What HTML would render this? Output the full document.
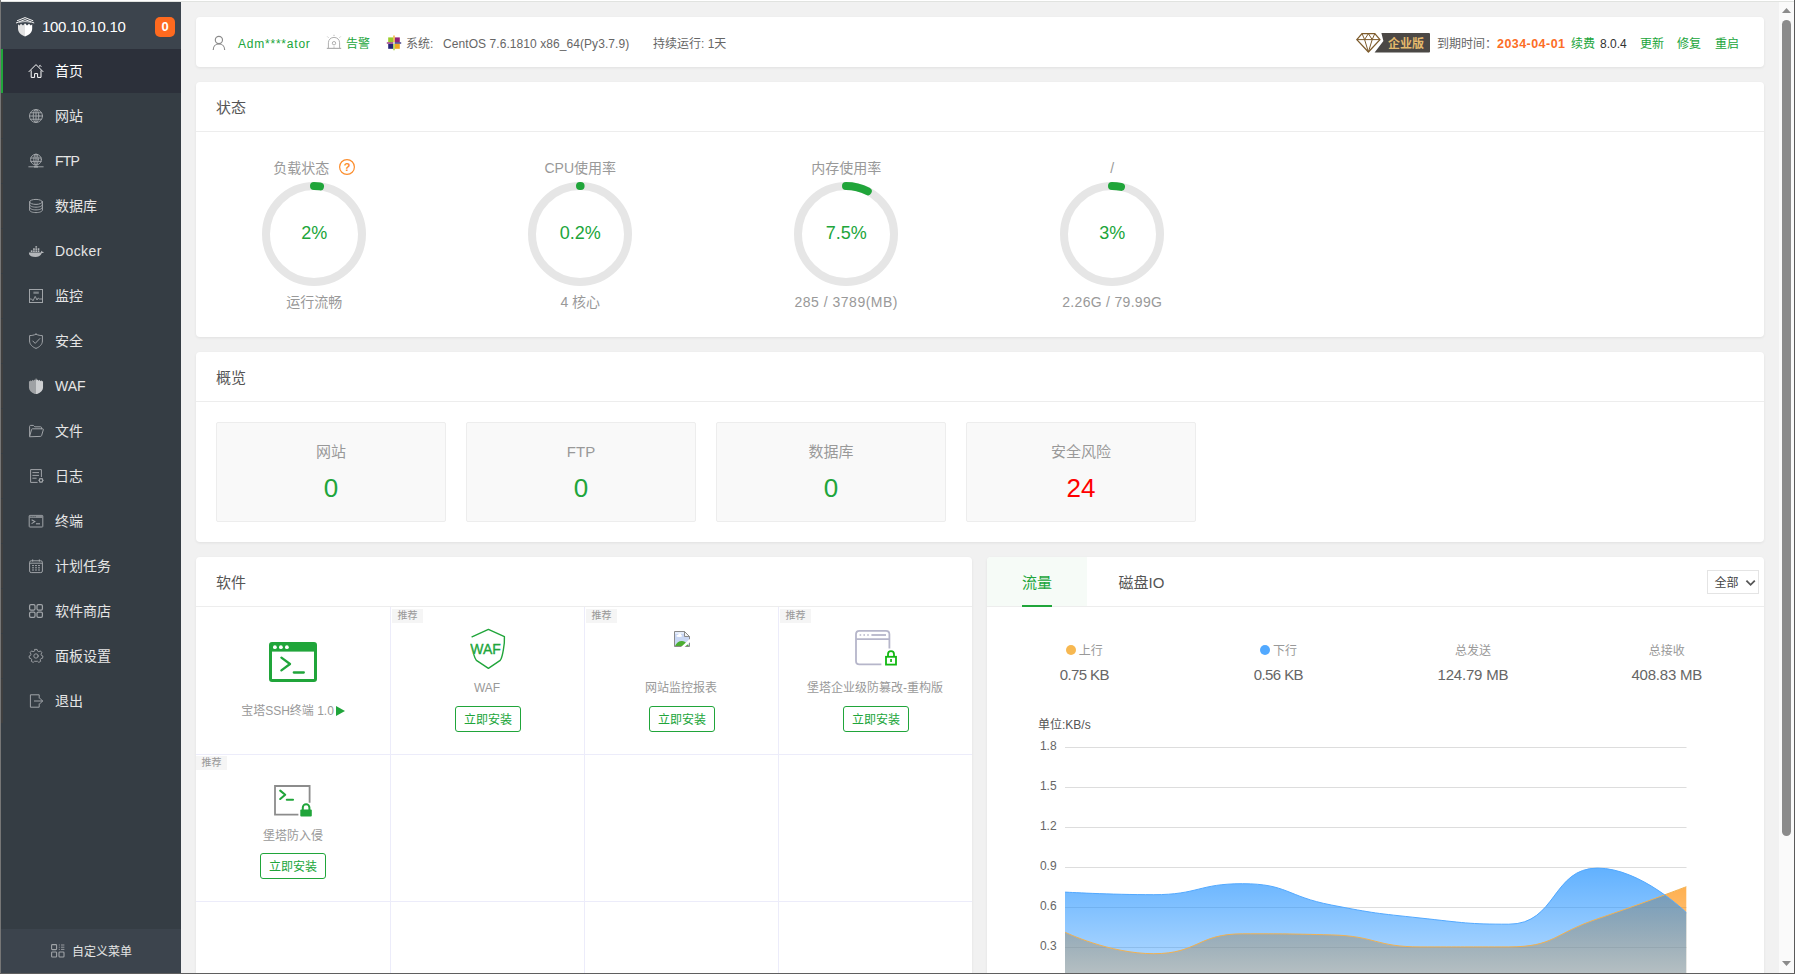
<!DOCTYPE html>
<html lang="zh-CN">
<head>
<meta charset="utf-8">
<title>宝塔Linux面板</title>
<style>
*{box-sizing:border-box;margin:0;padding:0}
html,body{width:1795px;height:974px;overflow:hidden;background:#f1f1f1}
body{position:relative;font-family:"Liberation Sans","Noto Sans CJK SC",sans-serif;font-size:12px;color:#666;line-height:1}
.abs{position:absolute}
a{text-decoration:none;color:inherit}
.g{color:#20a53a}
/* window frame */
#fr-l{left:0;top:0;width:1px;height:974px;background:#767676;z-index:50}
#fr-t{left:1px;top:0;width:1794px;height:2px;background:linear-gradient(#fff 0,#fff 1px,#e1e3e0 1px,#e1e3e0 2px);z-index:49}
#fr-r{left:1794px;top:0;width:1px;height:974px;background:#5a5a5a;z-index:50}
#fr-b{left:0;top:973px;width:1795px;height:1px;background:#5f5f5f;z-index:50}
/* sidebar */
#side{left:1px;top:2px;width:180px;height:972px;background:#353d44}
#side .hd{left:0;top:0;width:180px;height:47px;background:#3c444d}
#side .ip{left:41px;top:15px;font-size:15px;color:#fff;line-height:20px;letter-spacing:-.35px}
#side .bdg{left:154px;top:15px;width:20px;height:20px;border-radius:5px;background:#ff6a1f;color:#fff;font-weight:bold;font-size:13px;line-height:20px;text-align:center}
#side .it{left:0;width:180px;height:44px;color:#e6e6e6;font-size:14px;line-height:44px;padding-left:52px;border-left:2px solid #3f3f3f}
#side .it.on{background:#2c303a;color:#fff;border-left:2px solid #20a53a;padding-left:52px}
#side .it svg{position:absolute;left:25px;top:14px;width:16px;height:16px}
#side .it.on svg{left:25px}
#side .ft{left:0;top:927px;width:180px;height:45px;background:#3c444d;color:#fff;font-size:12px}
/* cards */
.card{background:#fff;border-radius:4px;box-shadow:0 1px 3px rgba(0,0,0,.07)}
#top .t{position:absolute;top:19px;line-height:16px;white-space:nowrap}
.ttl{left:20px;font-size:15px;color:#555;line-height:20px}
.hr{left:0;height:1px;background:#ededed}
.gg{top:0;width:200px;height:255px;text-align:center;white-space:nowrap}
.gg .lb{left:0;top:76px;width:200px;font-size:14px;line-height:20px;color:#999}
.gg .vl{left:0;top:138px;width:200px;font-size:18px;line-height:26px;color:#20a53a}
.gg .bt{left:0;top:210px;width:200px;font-size:14px;line-height:20px;color:#999}
.ob{top:70px;width:230px;height:100px;background:#f9f9f9;border:1px solid #ededed;border-radius:2px;text-align:center}
.ob .ol{left:0;top:18px;width:228px;font-size:15px;line-height:22px;color:#999}
.ob .on{left:0;top:49px;width:228px;font-size:26px;line-height:32px}
.gl{background:#ececfa}
.cl{width:194px;height:147px;text-align:center}
.cl .tg{left:2px;top:2px;width:31px;height:14px;background:#f5f5f5;color:#999;font-size:10px;line-height:14px;text-align:center}
.cl .nm{left:0;width:194px;line-height:16px;color:#999;white-space:nowrap}
.cl .bn{left:65px;top:99px;width:66px;height:26px;border:1px solid #20a53a;border-radius:3px;color:#20a53a;line-height:27px;text-align:center}
.tri{display:inline-block;width:0;height:0;border-left:9px solid #20a53a;border-top:5.5px solid transparent;border-bottom:5.5px solid transparent;vertical-align:-1px;margin-left:2px}
.tb{top:15px;font-size:15px;line-height:22px;white-space:nowrap}
.sel{left:720px;top:13px;width:52px;height:24px;border:1px solid #e4e4e4;background:#fff;color:#444;line-height:24px;padding-left:6.5px}
.nc{top:83px;width:194px;height:50px;text-align:center;white-space:nowrap}
.nc .nl{left:0;top:3px;width:194px;line-height:16px;color:#999}
.nc .nv{left:0;top:24px;width:194px;font-size:15px;line-height:22px;color:#666;letter-spacing:-.6px}
.dot{display:inline-block;width:10px;height:10px;border-radius:5px;vertical-align:0;margin-right:3px}
</style>
</head>
<body>
<div id="fr-l" class="abs"></div><div id="fr-t" class="abs"></div><div id="fr-r" class="abs"></div><div id="fr-b" class="abs"></div>

<!-- SIDEBAR -->
<div id="side" class="abs">
  <div class="hd abs"></div>
  <svg class="abs" style="left:14px;top:13px" width="20" height="24" viewBox="0 0 20 24"><path d="M3 9.2 L4.4 10.6 L6 8.8 L8 10.6 L10 8.2 V21.6 C5.6 19.8 3 17.4 3 13.6Z" fill="#e2e2e2"/><path d="M17.2 9.2 L15.8 10.6 L14 8.8 L12 10.6 L10 8.2 V21.6 C14.6 19.8 17.2 17.4 17.2 13.6Z" fill="#fff"/><g stroke="#f4f4f4" stroke-width="1" fill="none"><path d="M2 5.8 L10 2.6 L18.2 5.8"/><path d="M1 8 L10 4.6 L19.2 8"/><path d="M4 7.2 L10 6.6 L16 7.2" stroke-width=".8"/></g></svg>
  <div class="ip abs">100.10.10.10</div>
  <div class="bdg abs">0</div>
  <!--MENU_S-->
  <div class="it abs on" style="top:47px"><svg viewBox="0 0 16 16"><g stroke="#fff" stroke-width="1" fill="none" stroke-linecap="round" stroke-linejoin="round"><path d="M1 8.6 L8 1.6 L15 8.6"/><path d="M3.2 7.8 V14.4 H6.6 V10.6 H9.6 V14.4 H13 V7.8"/><path d="M11.2 3.2 L12.2 2.4 L13 3.4"/></g></svg>首页</div>
  <div class="it abs" style="top:92px"><svg viewBox="0 0 16 16"><g stroke="#a0a4a8" stroke-width="1" fill="none" stroke-linecap="round" stroke-linejoin="round"><circle cx="8" cy="8" r="6.5"/><ellipse cx="8" cy="8" rx="2.8" ry="6.5"/><path d="M1.5 8 H14.5 M2.6 4.8 H13.4 M2.6 11.2 H13.4 M8 1.5 V14.5"/></g></svg>网站</div>
  <div class="it abs" style="top:137px;letter-spacing:-.8px"><svg viewBox="0 0 16 16"><g stroke="#a0a4a8" stroke-width="1" fill="none" stroke-linecap="round" stroke-linejoin="round"><circle cx="8" cy="6.6" r="5.4"/><ellipse cx="8" cy="6.6" rx="2.2" ry="5.4"/><path d="M2.8 5 H13.2 M2.8 8.4 H13.2 M8 1.2 V12"/><path d="M0.8 13.8 H15.2"/><rect x="6" y="12.8" width="4" height="1.8" fill="#a0a4a8" stroke="none"/></g></svg>FTP</div>
  <div class="it abs" style="top:182px"><svg viewBox="0 0 16 16"><g stroke="#a0a4a8" stroke-width="1" fill="none" stroke-linecap="round" stroke-linejoin="round"><ellipse cx="8" cy="3.9" rx="6.4" ry="2.5"/><path d="M1.6 3.9 V12 C1.6 13.5 4.4 14.6 8 14.6 C11.6 14.6 14.4 13.5 14.4 12 V3.9"/><path d="M1.6 6.6 C1.6 8.1 4.4 9.2 8 9.2 C11.6 9.2 14.4 8.1 14.4 6.6"/><path d="M1.6 9.3 C1.6 10.8 4.4 11.9 8 11.9 C11.6 11.9 14.4 10.8 14.4 9.3"/></g></svg>数据库</div>
  <div class="it abs" style="top:227px;letter-spacing:.4px"><svg viewBox="0 0 16 16"><g fill="#b4b7ba" transform="translate(-0.3,0.9) scale(1.04)"><path d="M1.2 8.2 H12.6 C12.9 7.2 13.4 6.6 13.4 6.6 C13.9 7 14 7.6 14 7.6 C14.6 7.4 15.4 7.6 15.6 8 C15 8.8 13.8 8.8 13.6 8.8 C12.6 11.4 10.4 12.6 7.6 12.6 C3.2 12.6 1 11.2 1.2 8.2Z"/><rect x="3" y="6.2" width="1.6" height="1.6"/><rect x="5.2" y="6.2" width="1.6" height="1.6"/><rect x="7.4" y="6.2" width="1.6" height="1.6"/><rect x="9.6" y="6.2" width="1.6" height="1.6"/><rect x="5.2" y="4.2" width="1.6" height="1.6"/><rect x="7.4" y="4.2" width="1.6" height="1.6"/><rect x="9.6" y="4.2" width="1.6" height="1.6"/><rect x="7.4" y="2.2" width="1.6" height="1.4"/></g></svg>Docker</div>
  <div class="it abs" style="top:272px"><svg viewBox="0 0 16 16"><g stroke-linecap="butt" stroke-linejoin="miter" stroke="#a0a4a8" stroke-width="1" fill="none" stroke-linecap="round" stroke-linejoin="round"><rect x="1.5" y="1.5" width="13" height="13"/><path d="M2 11 H3.6 L5 12.8 L7.2 8.4 L9 12 L10.2 10 L11.4 11 H14" stroke-width="0.9"/><rect x="5.4" y="3.6" width="5.4" height="2.2" fill="#7d8388" stroke="none"/></g></svg>监控</div>
  <div class="it abs" style="top:317px"><svg viewBox="0 0 16 16"><g stroke="#a0a4a8" stroke-width="1" fill="none" stroke-linecap="round" stroke-linejoin="round"><path d="M8 1.2 C10 2.2 12.4 2.6 14.4 2.6 V8 C14.4 11.4 11.6 14 8 15.4 C4.4 14 1.6 11.4 1.6 8 V2.6 C3.6 2.6 6 2.2 8 1.2Z"/><path d="M4.8 8 L7.2 10.4 L11.8 5.6"/></g></svg>安全</div>
  <div class="it abs" style="top:362px"><svg viewBox="0 0 16 16"><g transform="translate(-0.8,-0.6) scale(1.1)"><path d="M8 0.6 V15.6 C4 13.8 1.6 12 1.6 9.4 V3.6 L2.6 3.6 L3.2 2.6 L4 3.4 L4.8 2.2 L5.6 3 L6.6 1.8 L7.2 2.6Z" fill="#9ea1a4"/><path d="M8 0.6 V15.6 C12 13.8 14.4 12 14.4 9.4 V3.6 L13.4 3.6 L12.8 2.6 L12 3.4 L11.2 2.2 L10.4 3 L9.4 1.8 L8.8 2.6Z" fill="#cdcfd1"/></g></svg>WAF</div>
  <div class="it abs" style="top:407px"><svg viewBox="0 0 16 16"><g stroke="#a0a4a8" stroke-width="1" fill="none" stroke-linecap="round" stroke-linejoin="round"><path d="M1.6 12.6 V3.4 C1.6 2.8 2 2.4 2.6 2.4 H5.4 L6.8 3.8 H12.6 C13.2 3.8 13.6 4.2 13.6 4.8 V5.8"/><path d="M1.6 13.4 L3.6 6.4 C3.7 6 4 5.8 4.4 5.8 H14.6 C15.2 5.8 15.5 6.2 15.3 6.8 L13.6 12.6 C13.5 13.1 13.1 13.4 12.6 13.4Z"/></g></svg>文件</div>
  <div class="it abs" style="top:452px"><svg viewBox="0 0 16 16"><g stroke-linecap="butt" stroke="#a0a4a8" stroke-width="1" fill="none" stroke-linecap="round" stroke-linejoin="round"><path d="M9.6 14.4 H2.6 V1.6 H13.4 V9"/><path d="M4.4 4.6 H11 M4.4 7.4 H11 M4.4 10.2 H8.6"/><circle cx="13" cy="12.4" r="1.7" stroke-width="1.2"/><path d="M13 9.9 V10.5 M13 14.3 V14.9 M10.5 12.4 H11.1 M14.9 12.4 H15.5 M11.3 10.7 L11.7 11.1 M14.3 13.7 L14.7 14.1 M11.3 14.1 L11.7 13.7 M14.3 11.1 L14.7 10.7" stroke-width="1.1"/></g></svg>日志</div>
  <div class="it abs" style="top:497px"><svg viewBox="0 0 16 16"><g stroke-linecap="butt" stroke-linejoin="miter" stroke="#a0a4a8" stroke-width="1" fill="none" stroke-linecap="round" stroke-linejoin="round"><rect x="1.2" y="2.4" width="13.6" height="11.6" rx="0.6"/><rect x="1.2" y="2.4" width="13.6" height="2.6" fill="#858a8f" stroke="none"/><path d="M3.6 6.8 L6.8 8.6 L3.6 10.6" stroke-width="1.1"/><path d="M8 10.8 H12" stroke-width="1.1"/><rect x="2.6" y="3.2" width="1" height="1" fill="#353d44" stroke="none"/><rect x="4.6" y="3.2" width="1" height="1" fill="#353d44" stroke="none"/><rect x="6.6" y="3.2" width="1" height="1" fill="#353d44" stroke="none"/></g></svg>终端</div>
  <div class="it abs" style="top:542px"><svg viewBox="0 0 16 16"><g stroke-linecap="butt" stroke="#a0a4a8" stroke-width="1" fill="none" stroke-linecap="round" stroke-linejoin="round"><rect x="1.6" y="2.8" width="12.8" height="11.8" rx="1.6"/><path d="M1.6 5.2 H14.4"/><path d="M4.6 1.4 V3.4 M11.4 1.4 V3.4" stroke-width="1.2"/><path d="M4 7.6 H6 M7 7.6 H9 M10 7.6 H12 M4 9.8 H6 M7 9.8 H9 M10 9.8 H12 M4 12 H6 M7 12 H9 M10 12 H12" stroke-width="1"/></g></svg>计划任务</div>
  <div class="it abs" style="top:587px"><svg viewBox="0 0 16 16"><g stroke-width="1.25" stroke="#a0a4a8" stroke-width="1" fill="none" stroke-linecap="round" stroke-linejoin="round"><rect x="1.6" y="1.6" width="5.4" height="5.4" rx="1.3"/><rect x="9" y="1.6" width="5.4" height="5.4" rx="1.3"/><rect x="1.6" y="9" width="5.4" height="5.4" rx="1.3"/><rect x="9" y="9" width="5.4" height="5.4" rx="1.3"/></g></svg>软件商店</div>
  <div class="it abs" style="top:632px"><svg viewBox="0 0 16 16"><g stroke-width="0.9" stroke="#a0a4a8" stroke-width="1" fill="none" stroke-linecap="round" stroke-linejoin="round"><circle cx="8" cy="8" r="2.2"/><path d="M6.9 1.4 H9.1 L9.5 3 L10.9 3.7 L12.4 2.9 L13.9 4.7 L13 6.1 L13.4 7.4 L14.9 8 L14.6 10.2 L13 10.5 L12.2 11.8 L12.7 13.3 L10.8 14.4 L9.6 13.3 H8 H6.4 L5.2 14.4 L3.3 13.3 L3.8 11.8 L3 10.5 L1.4 10.2 L1.1 8 L2.6 7.4 L3 6.1 L2.1 4.7 L3.6 2.9 L5.1 3.7 L6.5 3Z"/></g></svg>面板设置</div>
  <div class="it abs" style="top:677px"><svg viewBox="0 0 16 16"><g stroke-linejoin="miter" stroke="#a0a4a8" stroke-width="1" fill="none" stroke-linecap="round" stroke-linejoin="round"><path d="M11.2 5 V1.8 H2.4 V14.2 H11.2 V11"/><path d="M6.4 8 H14.4 M12 5.4 L14.6 8 L12 10.6"/></g></svg>退出</div>
  <!--MENU_E-->
  <div class="ft abs"><svg class="abs" style="left:49px;top:14px" width="16" height="16" viewBox="0 0 16 16"><g fill="none" stroke="#a0a4a8" stroke-width="1.1"><rect x="1.6" y="1.6" width="5" height="5" rx=".8"/><rect x="1.6" y="9" width="5" height="5" rx=".8"/><rect x="9" y="9" width="5" height="5" rx=".8"/><path d="M8.8 2 H9.8 M11 2 H14.4 M8.8 4.2 H9.8 M11 4.2 H14.4 M8.8 6.4 H9.8 M11 6.4 H14.4" stroke-width=".9"/></g></svg><span class="abs" style="left:71px;top:15px;line-height:16px;color:#e4e4e4;white-space:nowrap">自定义菜单</span></div>
</div>

<!-- TOP INFO -->
<div id="top" class="abs card" style="left:196px;top:17px;width:1568px;height:50px">
  <svg class="abs" style="left:15px;top:17px" width="18" height="18" viewBox="0 0 18 18"><g fill="none" stroke="#8a8a8a" stroke-width="1.15"><circle cx="7.9" cy="6" r="3.6"/><path d="M2.2 16 C2.2 12.4 4.6 10 7.9 10 C11.2 10 13.7 12.4 13.7 16"/></g></svg>
  <span class="t g" style="left:42px;letter-spacing:.78px">Adm****ator</span>
  <svg class="abs" style="left:129px;top:16px" width="18" height="18" viewBox="0 0 18 18"><g fill="none" stroke="#b0b0b0" stroke-width="1"><path d="M3.4 15.2 V9.8 C3.4 6.6 5.8 4.4 9 4.4 C12.2 4.4 14.6 6.6 14.6 9.8 V15.2"/><path d="M1.8 15.4 H16.2" stroke-width="1.2"/><circle cx="9" cy="10.2" r="1.7"/><path d="M9 1.8 V3 M2.4 3.6 L3.4 4.6 M15.6 3.6 L14.6 4.6 M9 13.4 V14.8" stroke-width=".9"/></g></svg>
  <span class="t g" style="left:150px">告警</span>
  <svg class="abs" style="left:190px;top:18px" width="16" height="16" viewBox="0 0 16 16"><rect x="2.2" y="2.4" width="5" height="5" fill="#9ccd2a"/><rect x="8.8" y="2.4" width="5" height="5" fill="#932279"/><rect x="2.2" y="8.8" width="5" height="5" fill="#262577"/><rect x="8.8" y="8.8" width="5" height="5" fill="#efa724"/><path d="M8 0.6 V8" stroke="#efa724" stroke-width="1.3"/><path d="M8 8 V15.2" stroke="#9ccd2a" stroke-width="1.3"/><path d="M0.8 8 H8" stroke="#932279" stroke-width="1.3"/><path d="M8 8 H15.2" stroke="#262577" stroke-width="1.3"/><rect x="7.2" y="7.2" width="1.6" height="1.6" fill="#fff"/></svg>
  <span class="t" style="left:210px">系统:</span>
  <span class="t" style="left:247px;letter-spacing:.07px">CentOS 7.6.1810 x86_64(Py3.7.9)</span>
  <span class="t" style="left:457px">持续运行: 1天</span>
  <svg class="abs" style="left:1159px;top:14px" width="78" height="24" viewBox="0 0 78 24"><path d="M26.4 2 H74 Q75 2 75 3 V20.6 Q75 21.6 74 21.6 H19.6 L28.4 10Z" fill="#4b4845"/><g fill="none" stroke="#7d5b2c" stroke-width="1.3" stroke-linejoin="round"><path d="M7 2.6 H19.8 L25 8.6 L13.4 21 L1.8 8.6Z"/><path d="M1.8 8.6 H25 M7 2.6 L9.6 8.6 L13.4 21 L17.2 8.6 L19.8 2.6 M13.4 2.6 L9.6 8.6 M13.4 2.6 L17.2 8.6" stroke-width="1"/></g></svg>
  <span class="t" style="left:1192px;color:#e4b96c;font-weight:bold">企业版</span>
  <span class="t" style="left:1241px">到期时间：</span>
  <span class="t" style="left:1301px;color:#fc6d26;font-weight:bold;font-size:12.5px;letter-spacing:.45px">2034-04-01</span>
  <span class="t g" style="left:1375px">续费</span>
  <span class="t" style="left:1404px;color:#333">8.0.4</span>
  <span class="t g" style="left:1444px">更新</span>
  <span class="t g" style="left:1481px">修复</span>
  <span class="t g" style="left:1519px">重启</span>
</div>
<!-- STATUS -->
<div id="stat" class="abs card" style="left:196px;top:82px;width:1568px;height:255px">
  <div class="abs ttl" style="top:16px">状态</div>
  <div class="abs hr" style="top:49px;width:1568px"></div>
  <div class="abs gg" style="left:18.25px">
    <div class="abs lb" style="left:-13px">负载状态</div>
    <svg class="abs" style="left:48px;top:100px" width="104" height="104" viewBox="0 0 104 104"><circle cx="52" cy="52" r="48" fill="none" stroke="#e6e6e6" stroke-width="8"/><path d="M52 4 A48 48 0 0 1 58.02 4.38" fill="none" stroke="#20a53a" stroke-width="8" stroke-linecap="round"/></svg>
    <div class="abs vl">2%</div>
    <div class="abs bt">运行流畅</div>
  </div>
  <div class="abs gg" style="left:284.25px">
    <div class="abs lb">CPU使用率</div>
    <svg class="abs" style="left:48px;top:100px" width="104" height="104" viewBox="0 0 104 104"><circle cx="52" cy="52" r="48" fill="none" stroke="#e6e6e6" stroke-width="8"/><path d="M52 4 A48 48 0 0 1 52.60 4.00" fill="none" stroke="#20a53a" stroke-width="8" stroke-linecap="round"/></svg>
    <div class="abs vl">0.2%</div>
    <div class="abs bt">4 核心</div>
  </div>
  <div class="abs gg" style="left:550.25px">
    <div class="abs lb">内存使用率</div>
    <svg class="abs" style="left:48px;top:100px" width="104" height="104" viewBox="0 0 104 104"><circle cx="52" cy="52" r="48" fill="none" stroke="#e6e6e6" stroke-width="8"/><path d="M52 4 A48 48 0 0 1 73.79 9.23" fill="none" stroke="#20a53a" stroke-width="8" stroke-linecap="round"/></svg>
    <div class="abs vl">7.5%</div>
    <div class="abs bt" style="letter-spacing:.5px">285 / 3789(MB)</div>
  </div>
  <div class="abs gg" style="left:816.25px">
    <div class="abs lb">/</div>
    <svg class="abs" style="left:48px;top:100px" width="104" height="104" viewBox="0 0 104 104"><circle cx="52" cy="52" r="48" fill="none" stroke="#e6e6e6" stroke-width="8"/><path d="M52 4 A48 48 0 0 1 60.99 4.85" fill="none" stroke="#20a53a" stroke-width="8" stroke-linecap="round"/></svg>
    <div class="abs vl">3%</div>
    <div class="abs bt" style="letter-spacing:.3px">2.26G / 79.99G</div>
  </div>
  <svg class="abs" style="left:142px;top:76px" width="18" height="18" viewBox="0 0 18 18"><circle cx="9" cy="9" r="7.4" fill="none" stroke="#fc8d2c" stroke-width="1.2"/><text x="9" y="13" text-anchor="middle" font-family="Liberation Sans,sans-serif" font-size="11" font-weight="bold" fill="#fc8d2c">?</text></svg>
</div>
<!-- OVERVIEW -->
<div id="ov" class="abs card" style="left:196px;top:352px;width:1568px;height:190px">
  <div class="abs ttl" style="top:16px">概览</div>
  <div class="abs hr" style="top:49px;width:1568px"></div>
  <div class="abs ob" style="left:20px"><div class="abs ol">网站</div><div class="abs on" style="color:#20a53a">0</div></div>
  <div class="abs ob" style="left:270px"><div class="abs ol">FTP</div><div class="abs on" style="color:#20a53a">0</div></div>
  <div class="abs ob" style="left:520px"><div class="abs ol">数据库</div><div class="abs on" style="color:#20a53a">0</div></div>
  <div class="abs ob" style="left:770px"><div class="abs ol">安全风险</div><div class="abs on" style="color:#f00">24</div></div>
</div>
<!-- SOFTWARE -->
<div id="soft" class="abs card" style="left:196px;top:557px;width:776px;height:430px">
  <div class="abs ttl" style="top:16px">软件</div>
  <div class="abs hr" style="top:49px;width:776px"></div>
  <div class="abs gl" style="left:0;top:197px;width:776px;height:1px"></div>
  <div class="abs gl" style="left:0;top:344px;width:776px;height:1px"></div>
  <div class="abs gl" style="left:194px;top:50px;width:1px;height:380px"></div>
  <div class="abs gl" style="left:388px;top:50px;width:1px;height:380px"></div>
  <div class="abs gl" style="left:582px;top:50px;width:1px;height:380px"></div>
  <div class="abs cl" style="left:0px;top:50px"><svg class="abs" style="left:73px;top:35px" width="48" height="41" viewBox="0 0 48 41"><rect x="1.5" y="1.5" width="45" height="37" rx="1.5" fill="none" stroke="#20a53a" stroke-width="3"/><rect x="1" y="1" width="46" height="8.6" fill="#20a53a"/><circle cx="5.9" cy="5.2" r="1.9" fill="#fff"/><circle cx="11.9" cy="5.2" r="1.9" fill="#fff"/><circle cx="17.9" cy="5.2" r="1.9" fill="#fff"/><path d="M12.4 15.6 L21 22 L12.4 28.4" fill="none" stroke="#20a53a" stroke-width="2.3" stroke-linecap="round" stroke-linejoin="round"/><path d="M24.8 30.5 H34.8" stroke="#20a53a" stroke-width="2.3" stroke-linecap="round"/></svg><div class="abs nm" style="top:96px">宝塔SSH终端 1.0<i class="tri"></i></div></div>
  <div class="abs cl" style="left:194px;top:50px"><div class="abs tg">推荐</div><svg class="abs" style="left:80px;top:21px" width="38" height="42" viewBox="0 0 38 42"><path d="M18.4 1.4 L34.4 8.6 C34.6 13 34.2 18 33.4 21.6 C32.4 27.6 31.4 31 30.2 32.4 L18.4 40.4 L6.4 32.4 C5.4 31 4.4 28.6 3.8 26.6 M2 8.8 L18.4 1.4" fill="none" stroke="#20a53a" stroke-width="1.4" stroke-linejoin="round" stroke-linecap="round"/><text x="15.6" y="25.6" text-anchor="middle" font-family="Liberation Sans,sans-serif" font-size="14" fill="#20a53a" stroke="#20a53a" stroke-width=".35">WAF</text></svg><div class="abs nm" style="top:73px">WAF</div><div class="abs bn">立即安装</div></div>
  <div class="abs cl" style="left:388px;top:50px"><div class="abs tg">推荐</div><svg class="abs" style="left:90px;top:24px" width="16" height="16" viewBox="0 0 16 16"><path d="M0.5 0.5 H10.5 L15.5 5.5 V15.5 H0.5Z" fill="#c9d7f4" stroke="#8a8a8a" stroke-width="1"/><path d="M1 1 H10 V3 H1Z" fill="#e4ecfb"/><ellipse cx="5.2" cy="4.9" rx="2.9" ry="1.1" fill="#fff"/><circle cx="5.7" cy="4" r="1.4" fill="#fff"/><path d="M1 15 C2.4 11.6 5.4 9.7 8 9.9 C10 10 11.6 11 12.6 12.4 L15 15Z" fill="#4cae32"/><path d="M10.5 0.5 V5.5 H15.5Z" fill="#f4f4f4" stroke="#8a8a8a" stroke-width="1" stroke-linejoin="round"/><path d="M6.8 16.2 H10.4 L16.2 11 V7.6Z" fill="#fff"/></svg><div class="abs nm" style="top:73px">网站监控报表</div><div class="abs bn">立即安装</div></div>
  <div class="abs cl" style="left:582px;top:50px"><div class="abs tg">推荐</div><svg class="abs" style="left:75px;top:22px" width="48" height="40" viewBox="0 0 48 40"><path d="M28.4 35.4 H6.4 Q3 35.4 3 32 V5.2 Q3 1.8 6.4 1.8 H33 Q36.4 1.8 36.4 5.2 V19.4" fill="none" stroke="#b6b6ca" stroke-width="1.8"/><path d="M3 10.2 H36.4" stroke="#b6b6ca" stroke-width="1.8"/><path d="M6.6 6 H8.2 M10.4 6 H12 M14.2 6 H15.8" stroke="#b6b6ca" stroke-width="1.6"/><path d="M18.4 6 H33" stroke="#b6b6ca" stroke-width="1.8"/><rect x="33" y="27.8" width="10" height="7.8" fill="none" stroke="#12b812" stroke-width="1.8"/><path d="M35 27.4 V25.2 A3 3 0 0 1 41 25.2 V27.4" fill="none" stroke="#12b812" stroke-width="1.8"/><rect x="37.2" y="30" width="1.7" height="3" fill="#12b812"/></svg><div class="abs nm" style="top:73px">堡塔企业级防篡改-重构版</div><div class="abs bn">立即安装</div></div>
  <div class="abs cl" style="left:0px;top:197px"><div class="abs tg" style="left:0">推荐</div><svg class="abs" style="left:76px;top:30px" width="42" height="36" viewBox="0 0 42 36"><path d="M26.4 30.6 H3 V2 H37.6 V18.8" fill="none" stroke="#8c8c8c" stroke-width="1.8"/><path d="M8.2 6.6 L13.2 10.8 L8.2 15" fill="none" stroke="#20a53a" stroke-width="2.1" stroke-linecap="round" stroke-linejoin="round"/><path d="M14.8 15.7 H21" stroke="#20a53a" stroke-width="2.1" stroke-linecap="round"/><rect x="28.3" y="25.4" width="11.5" height="7" rx="1" fill="#20a53a"/><path d="M30.8 26 V23.6 A3.3 3.3 0 0 1 37.4 23.6 V26" fill="none" stroke="#20a53a" stroke-width="2"/></svg><div class="abs nm" style="top:74px">堡塔防入侵</div><div class="abs bn" style="left:64px">立即安装</div></div>
</div>
<!-- TRAFFIC -->
<div id="net" class="abs card" style="left:987px;top:557px;width:777px;height:430px">
  <div class="abs" style="left:0;top:0;width:100px;height:49px;background:#f6fbf7;border-radius:4px 0 0 0"></div>
  <div class="abs hr" style="top:49px;width:777px"></div>
  <div class="abs tb g" style="left:35px">流量</div>
  <div class="abs" style="left:35px;top:48px;width:30px;height:2px;background:#20a53a"></div>
  <div class="abs tb" style="left:131.5px;color:#555">磁盘IO</div>
  <div class="abs sel"><span>全部</span><svg class="abs" style="left:37px;top:8px" width="11" height="8" viewBox="0 0 11 8"><path d="M1.4 1.6 L5.6 5.8 L9.8 1.6" fill="none" stroke="#555" stroke-width="1.8"/></svg></div>
  <div class="abs nc" style="left:0.3px"><div class="abs nl"><i class="dot" style="background:#f7b851"></i>上行</div><div class="abs nv" style="">0.75 KB</div></div>
  <div class="abs nc" style="left:194.4px"><div class="abs nl"><i class="dot" style="background:#52a9ff"></i>下行</div><div class="abs nv" style="">0.56 KB</div></div>
  <div class="abs nc" style="left:388.9px"><div class="abs nl">总发送</div><div class="abs nv" style=";letter-spacing:-.2px">124.79 MB</div></div>
  <div class="abs nc" style="left:582.8px"><div class="abs nl">总接收</div><div class="abs nv" style=";letter-spacing:-.2px">408.83 MB</div></div>
  <div class="abs" style="left:51px;top:160px;line-height:16px;color:#555">单位:KB/s</div>
  <svg class="abs" style="left:0;top:0" width="777" height="430" viewBox="987 557 777 430"><defs><linearGradient id="go" x1="0" y1="886.7" x2="0" y2="987.5" gradientUnits="userSpaceOnUse"><stop offset="0" stop-color="rgb(255,140,0)" stop-opacity=".69"/><stop offset="1" stop-color="rgb(255,140,0)" stop-opacity=".30"/></linearGradient><linearGradient id="gb" x1="0" y1="868" x2="0" y2="987.5" gradientUnits="userSpaceOnUse"><stop offset="0" stop-color="rgb(30,144,255)" stop-opacity=".70"/><stop offset="1" stop-color="rgb(30,144,255)" stop-opacity=".28"/></linearGradient></defs>
<path d="M1065 747.5 H1686.5" stroke="#ddd" stroke-width="1"/><path d="M1065 787.5 H1686.5" stroke="#ddd" stroke-width="1"/><path d="M1065 827.5 H1686.5" stroke="#ddd" stroke-width="1"/><path d="M1065 867.5 H1686.5" stroke="#ddd" stroke-width="1"/><path d="M1065 907.5 H1686.5" stroke="#ddd" stroke-width="1"/><path d="M1065 947.5 H1686.5" stroke="#ddd" stroke-width="1"/>
<g font-family="Liberation Sans,sans-serif" font-size="12" fill="#666"><text x="1056.6" y="750" text-anchor="end">1.8</text><text x="1056.6" y="790" text-anchor="end">1.5</text><text x="1056.6" y="830" text-anchor="end">1.2</text><text x="1056.6" y="870" text-anchor="end">0.9</text><text x="1056.6" y="910" text-anchor="end">0.6</text><text x="1056.6" y="950" text-anchor="end">0.3</text></g>
<path d="M1065.00 932.20 C1065.00 932.20 1109.29 953.70 1153.76 953.70 C1198.05 953.70 1197.59 933.80 1242.51 933.80 C1286.35 933.80 1287.09 933.80 1331.27 934.90 C1375.85 936.01 1375.45 946.90 1420.03 946.90 C1464.21 946.90 1465.47 946.90 1508.79 946.90 C1554.22 946.90 1553.47 933.75 1597.54 918.80 C1642.23 903.65 1686.30 886.70 1686.30 886.70 L1686.30 987.5 L1065.00 987.5Z" fill="url(#go)"/>
<path d="M1065.00 892.10 C1065.00 892.10 1109.54 894.70 1153.76 894.70 C1198.30 894.70 1198.59 883.70 1242.51 883.70 C1287.34 883.70 1286.51 896.35 1331.27 905.00 C1375.26 913.50 1375.47 913.18 1420.03 918.00 C1464.23 922.78 1468.07 924.20 1508.79 924.20 C1556.83 924.20 1551.92 868.10 1597.54 868.10 C1640.68 868.10 1686.30 912.60 1686.30 912.60 L1686.30 987.5 L1065.00 987.5Z" fill="url(#gb)"/><path d="M1065.00 932.20 C1065.00 932.20 1109.29 953.70 1153.76 953.70 C1198.05 953.70 1197.59 933.80 1242.51 933.80 C1286.35 933.80 1287.09 933.80 1331.27 934.90 C1375.85 936.01 1375.45 946.90 1420.03 946.90 C1464.21 946.90 1465.47 946.90 1508.79 946.90 C1554.22 946.90 1553.47 933.75 1597.54 918.80 C1642.23 903.65 1686.30 886.70 1686.30 886.70" fill="none" stroke="#f2b150" stroke-width="1"/><path d="M1065.00 892.10 C1065.00 892.10 1109.54 894.70 1153.76 894.70 C1198.30 894.70 1198.59 883.70 1242.51 883.70 C1287.34 883.70 1286.51 896.35 1331.27 905.00 C1375.26 913.50 1375.47 913.18 1420.03 918.00 C1464.23 922.78 1468.07 924.20 1508.79 924.20 C1556.83 924.20 1551.92 868.10 1597.54 868.10 C1640.68 868.10 1686.30 912.60 1686.30 912.60" fill="none" stroke="#52a9ff" stroke-width="1"/>
</svg>
</div>

<!-- SCROLLBAR -->
<div id="sb" class="abs" style="left:1779px;top:2px;width:15px;height:971px;background:#fafafa">
  <div class="abs" style="left:3px;top:18px;width:9px;height:816px;border-radius:4.5px;background:#8b8b8b"></div>
  <svg class="abs" style="left:0;top:0" width="15" height="971"><path d="M3 11 L7.5 6 L12 11Z" fill="#8b8b8b"/><path d="M3 959 L12 959 L7.5 964Z" fill="#8b8b8b"/></svg>
</div>
</body>
</html>
